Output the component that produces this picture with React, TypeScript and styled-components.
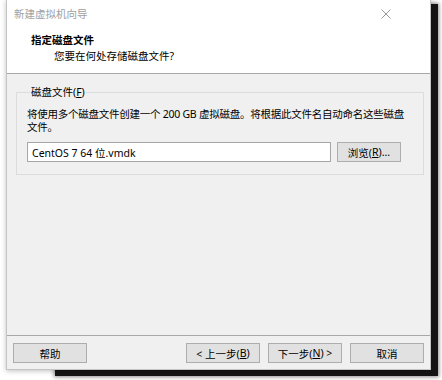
import styled, { createGlobalStyle } from "styled-components";

const GlobalStyle = createGlobalStyle`
  html, body {
    margin: 0;
    padding: 0;
    background: #ffffff;
  }
  body {
    font-family: "Noto Sans", "Noto Sans CJK SC", sans-serif;
    font-size: 10.5px;
    color: #000;
  }
`;

const Stage = styled.div`
  position: relative;
  width: 442px;
  height: 380px;
  overflow: hidden;
`;

// black window lying behind the dialog
const BackWindow = styled.div`
  position: absolute;
  left: 55px;
  top: 4px;
  width: 383px;
  height: 372px;
  background: #151515;
  box-shadow: 0 0 4px 1px rgba(0, 0, 0, 0.45);
`;

const Dialog = styled.div`
  position: relative;
  margin-left: 6px;
  width: 425px;
  height: 370px;
  box-sizing: border-box;
  border: 1px solid #c4c4c4;
  border-top: none;
  background: #f0f0f0;
  display: flex;
  flex-direction: column;
  box-shadow: 0 1px 5px rgba(0, 0, 0, 0.25);
`;

const TitleBar = styled.div`
  height: 27px;
  background: #fff;
  display: flex;
  align-items: center;
  justify-content: space-between;
  padding: 0 39px 0 7px;
`;

const TitleText = styled.span`
  color: #a0a0a0;
  font-size: 10.5px;
`;

const Header = styled.div`
  height: 47px;
  background: #fff;
  box-sizing: border-box;
  padding: 6px 0 0 24px;
  border-bottom: 1px solid #a8a8a8;
`;

const HeaderTitle = styled.div`
  font-weight: 700;
  font-size: 10.5px;
  line-height: 15px;
`;

const HeaderSub = styled.div`
  padding-left: 23px;
  line-height: 16px;
`;

const Content = styled.div`
  flex: 1;
  padding: 11px 7px 0 9px;
`;

const Group = styled.fieldset`
  margin: 0;
  padding: 9px 0 12px 10px;
  border: 1px solid #dcdcdc;
  width: 408px;
  box-sizing: border-box;
`;

const Legend = styled.legend`
  padding: 0 1px;
  margin-left: 3px;
  line-height: 14px;
`;

const Desc = styled.p`
  margin: 0;
  line-height: 13px;
  letter-spacing: -0.25px;
  white-space: nowrap;
`;

const FileRow = styled.div`
  display: flex;
  align-items: center;
  gap: 6px;
  margin-top: 8px;
`;

const FileInput = styled.div`
  width: 304px;
  height: 20px;
  box-sizing: border-box;
  border: 1px solid #a6a6a6;
  background: #fff;
  display: flex;
  align-items: center;
  padding-left: 4px;
  font-family: "Noto Sans", "Noto Sans CJK SC", sans-serif;
`;

const Button = styled.button<{ w?: number }>`
  width: ${p => p.w ?? 74}px;
  height: 20px;
  box-sizing: border-box;
  border: 1px solid #adadad;
  background: #e1e1e1;
  padding: 0;
  font-family: inherit;
  font-size: 10.5px;
  color: #000;
  display: flex;
  align-items: center;
  justify-content: center;
`;

const Footer = styled.div`
  height: 34px;
  border-top: 1px solid #a8a8a8;
  display: flex;
  align-items: flex-start;
  padding: 7px 0 0 6px;
  box-sizing: border-box;
`;

const Spacer = styled.div`
  flex: 1;
`;

const NavGroup = styled.div`
  display: flex;
  gap: 8px;
  padding-right: 6px;
`;

const Key = styled.span`
  text-decoration: underline;
`;

const CloseIcon = () => (
  <svg width="10" height="10" viewBox="0 0 10 10">
    <path d="M0.5 0.5 L9.5 9.5 M9.5 0.5 L0.5 9.5" stroke="#9a9a9a" strokeWidth="1" fill="none" />
  </svg>
);

export default function App() {
  return (
    <Stage>
      <GlobalStyle />
      <BackWindow />
      <Dialog>
        <TitleBar>
          <TitleText>新建虚拟机向导</TitleText>
          <CloseIcon />
        </TitleBar>
        <Header>
          <HeaderTitle>指定磁盘文件</HeaderTitle>
          <HeaderSub>您要在何处存储磁盘文件?</HeaderSub>
        </Header>
        <Content>
          <Group>
            <Legend>
              磁盘文件(<Key>F</Key>)
            </Legend>
            <Desc>
              将使用多个磁盘文件创建一个 200 GB 虚拟磁盘。将根据此文件名自动命名这些磁盘
              <br />
              文件。
            </Desc>
            <FileRow>
              <FileInput>CentOS 7 64 位.vmdk</FileInput>
              <Button w={64}>
                浏览(<Key>R</Key>)...
              </Button>
            </FileRow>
          </Group>
        </Content>
        <Footer>
          <Button>帮助</Button>
          <Spacer />
          <NavGroup>
            <Button>
              &lt; 上一步(<Key>B</Key>)
            </Button>
            <Button>
              下一步(<Key>N</Key>) &gt;
            </Button>
            <Button>取消</Button>
          </NavGroup>
        </Footer>
      </Dialog>
    </Stage>
  );
}
